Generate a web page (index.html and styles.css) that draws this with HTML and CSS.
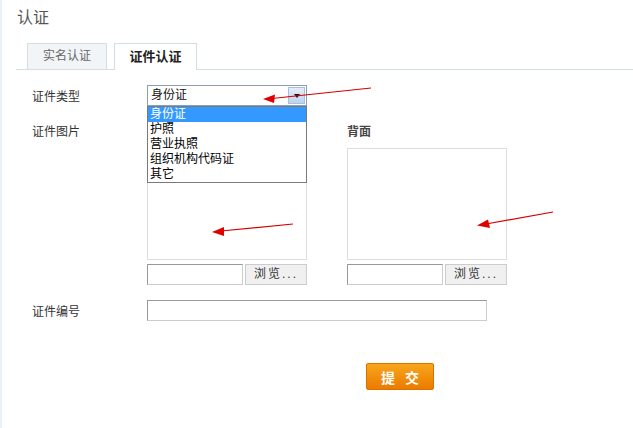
FILE: index.html
```html
<!DOCTYPE html>
<html lang="zh-CN">
<head>
    <meta charset="UTF-8">
    <title>认证</title>
    <link rel="stylesheet" href="styles.css">
</head>
<body>
<div class="page">
    <h2 class="title">认证</h2>
    <div class="tabs">
        <div class="tab">实名认证</div>
        <div class="tab active">证件认证</div>
    </div>
    <div class="form">
        <div class="row">
            <div class="label">证件类型</div>
            <div class="select">
                <div class="select-value">身份证</div>
                <div class="select-btn"><span class="caret"></span></div>
                <ul class="select-list">
                    <li class="selected">身份证</li>
                    <li>护照</li>
                    <li>营业执照</li>
                    <li>组织机构代码证</li>
                    <li>其它</li>
                </ul>
            </div>
        </div>
        <div class="row photos">
            <div class="label">证件图片</div>
            <div class="photo">
                <div class="photo-title"></div>
                <div class="photo-box"></div>
                <div class="file">
                    <div class="file-text"></div>
                    <div class="file-btn">浏览...</div>
                </div>
            </div>
            <div class="photo">
                <div class="photo-title">背面</div>
                <div class="photo-box"></div>
                <div class="file">
                    <div class="file-text"></div>
                    <div class="file-btn">浏览...</div>
                </div>
            </div>
        </div>
        <div class="row number">
            <div class="label">证件编号</div>
            <div class="text-input"></div>
        </div>
        <div class="actions">
            <button class="submit">提 交</button>
        </div>
    </div>

    <!-- red annotation arrows -->
    <svg class="marks" width="633" height="428">
        <g stroke="#d40000" stroke-width="1.2" fill="none">
            <line x1="371" y1="88" x2="272" y2="98.5"/>
            <line x1="293" y1="224" x2="221" y2="231"/>
            <line x1="553" y1="212" x2="486" y2="224"/>
        </g>
        <g fill="#e00000">
            <polygon points="263,99 275,94.5 274,103"/>
            <polygon points="212,232 224,227 224,236"/>
            <polygon points="477,225.5 488,219.5 490,228"/>
        </g>
    </svg>
</div>
</body>
</html>
```

FILE: styles.css
```css
body {
    margin: 0;
    font-family: "Liberation Sans", "Noto Sans CJK SC", sans-serif;
    font-size: 12px;
    color: #333;
}
.page {
    position: relative;
    height: 428px;
    box-sizing: border-box;
    border-left: 2px solid #eaf1f6;
    padding: 7px 0 0 14px;
}
.title {
    margin: 0 0 0 1px;
    font-size: 16px;
    font-weight: normal;
    line-height: 22px;
    color: #555;
}
.tabs {
    display: flex;
    gap: 7px;
    margin-top: 14px;
    padding-left: 11px;
    border-bottom: 1px solid #d3dfe5;
    height: 26px;
}
.tab {
    width: 78px;
    height: 25px;
    line-height: 25px;
    text-align: center;
    font-size: 12px;
    color: #666;
    background: #f1f5f8;
    border: 1px solid #d3dfe5;
    border-bottom: none;
}
.tab.active {
    width: 81px;
    height: 26px;
    background: #fff;
    color: #222;
    font-weight: bold;
    font-size: 13px;
}
.form {
    padding-left: 16px;
    padding-top: 15px;
}
.row {
    display: flex;
    align-items: center;
}
.label {
    width: 115px;
    flex: none;
    color: #333;
}
.select {
    position: relative;
    display: flex;
    width: 160px;
    height: 21px;
    box-sizing: border-box;
    border: 1px solid #8c9fb5;
    background: #fff;
}
.select-value {
    flex: 1;
    line-height: 19px;
    padding-left: 3px;
    color: #111;
}
.select-btn {
    width: 15px;
    margin: 1px;
    border: 1px solid #a9c0da;
    background: linear-gradient(#e4eefa, #bcd3ee);
    display: flex;
    align-items: center;
    justify-content: center;
}
.caret {
    border-left: 3px solid transparent;
    border-right: 3px solid transparent;
    border-top: 4px solid #111;
}
.select-list {
    position: absolute;
    top: 20px;
    left: -1px;
    width: 160px;
    box-sizing: border-box;
    margin: 0;
    padding: 0;
    list-style: none;
    background: #fff;
    border: 1px solid #7a7a7a;
    z-index: 2;
}
.select-list li {
    line-height: 15px;
    height: 15px;
    padding-left: 2px;
    color: #000;
}
.select-list li.selected {
    background: #3399ff;
    color: #fff;
}
.photos {
    align-items: flex-start;
    margin-top: 18px;
    gap: 40px;
}
.photos .label {
    width: 75px;
    line-height: 16px;
}
.photo {
    width: 160px;
}
.photo-title {
    height: 16px;
    line-height: 16px;
    font-weight: bold;
    color: #444;
}
.photo-box {
    margin-top: 8px;
    height: 112px;
    box-sizing: border-box;
    border: 1px solid #ddd;
}
.file {
    display: flex;
    gap: 2px;
    margin-top: 4px;
    height: 21px;
}
.file-text {
    width: 96px;
    box-sizing: border-box;
    border: 1px solid #ccc;
    border-top-color: #999;
    border-left-color: #999;
}
.file-btn {
    flex: 1;
    box-sizing: border-box;
    border: 1px solid #ccc;
    background: #f0f0f0;
    text-align: center;
    line-height: 19px;
    letter-spacing: 2px;
    color: #333;
}
.number {
    margin-top: 15px;
}
.text-input {
    width: 340px;
    height: 21px;
    box-sizing: border-box;
    border: 1px solid #ccc;
    border-top-color: #999;
    border-left-color: #999;
}
.actions {
    padding-left: 334px;
    margin-top: 42px;
}
.submit {
    width: 68px;
    height: 27px;
    border: 1px solid #d67400;
    border-radius: 2px;
    background: linear-gradient(#f7a51a, #ec7b00);
    color: #fff;
    font-family: "Liberation Sans", "Noto Sans CJK SC", sans-serif;
    font-size: 14px;
    font-weight: bold;
    letter-spacing: 3px;
    padding: 0 0 0 3px;
}
.marks {
    position: absolute;
    left: -2px;
    top: 0;
    pointer-events: none;
    z-index: 3;
}
```
